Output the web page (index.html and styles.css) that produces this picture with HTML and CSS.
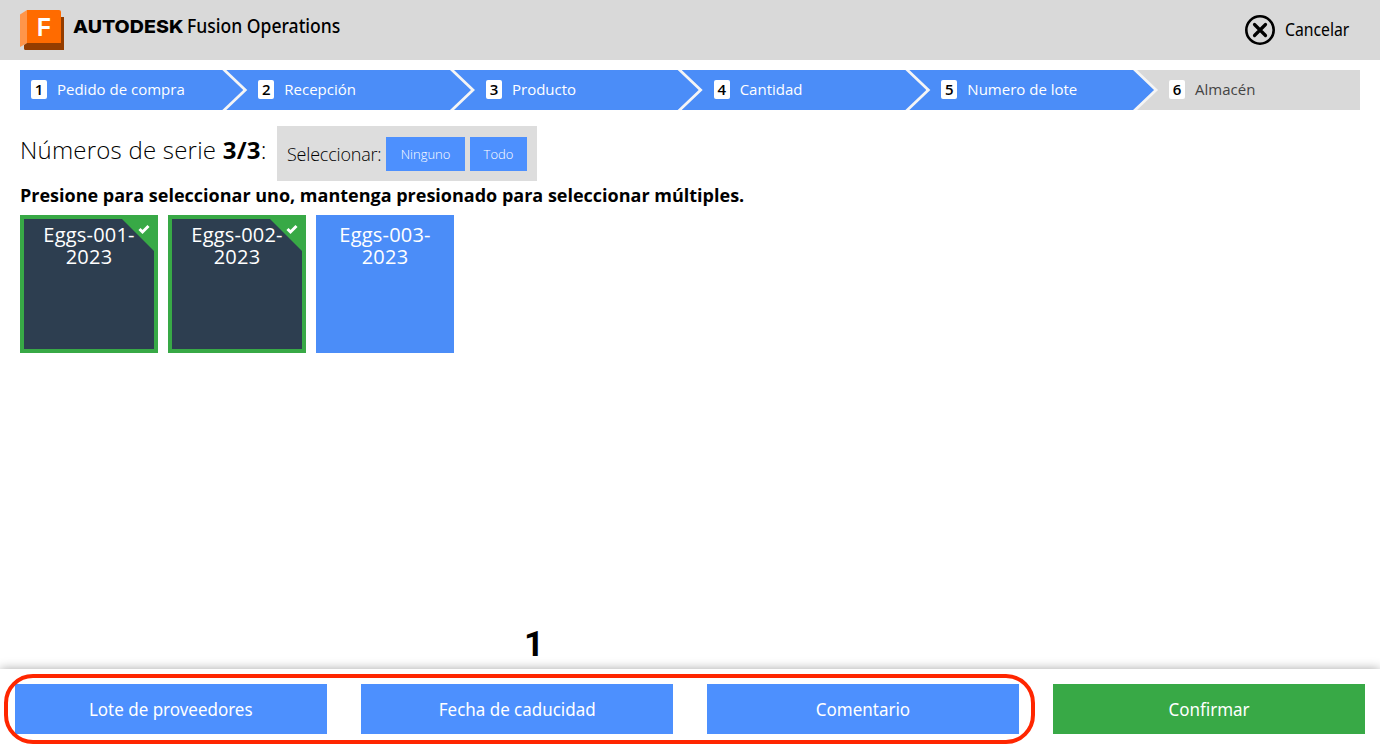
FILE: index.html
```html
<!DOCTYPE html>
<html lang="es">
<head>
<meta charset="utf-8">
<title>Fusion Operations</title>
<link rel="stylesheet" href="styles.css">
</head>
<body>
<header class="topbar">
  <div class="brand">
    <svg class="logo" width="44" height="40" viewBox="0 0 44 40">
      <path fill="#ff954a" d="M0 4.500 7 0v33L0 37z"/>
      <path fill="#943d00" d="M40 7h4v33H5.500Q4 40 4 38.500V35l3-2h33z"/>
      <path fill="#ff6b00" d="M7 0h32q2 0 2 2v31H7z"/>
    </svg>
    <span class="logo-letter">F</span>
    <span class="brand-name">AUTODESK</span>
    <span class="brand-product">Fusion Operations</span>
  </div>
  <button class="cancel">
    <svg width="30" height="30" viewBox="0 0 30 30" fill="none" stroke="#000">
      <circle cx="15" cy="15" r="13.700" stroke-width="2.600"/>
      <path d="m9.500 9.500 11 11m0-11-11 11" stroke-width="3.200" stroke-linecap="round"/>
    </svg>
    <span class="cancel-label">Cancelar</span>
  </button>
</header>
<nav class="steps">
  <div class="step first"><b class="num">1</b><span>Pedido de compra</span></div>
  <div class="step"><b class="num">2</b><span>Recepción</span></div>
  <div class="step"><b class="num">3</b><span>Producto</span></div>
  <div class="step"><b class="num">4</b><span>Cantidad</span></div>
  <div class="step"><b class="num">5</b><span>Numero de lote</span></div>
  <div class="step last"><b class="num">6</b><span>Almacén</span></div>
</nav>
<main class="content">
  <div class="heading">
    <h1 class="title">Números de serie <b>3/3</b>:</h1>
    <div class="select-box">
      <span class="select-label">Seleccionar:</span>
      <button class="small-btn none">Ninguno</button>
      <button class="small-btn all">Todo</button>
    </div>
  </div>
  <p class="hint">Presione para seleccionar uno, mantenga presionado para seleccionar múltiples.</p>
  <div class="tiles">
    <div class="tile selected">Eggs-001-<br>2023
      <svg class="corner" width="40" height="40" viewBox="0 0 40 40"><path fill="#38a946" d="M0 0h40v40z"/><path d="m21.500 14 3 3 6-6" fill="none" stroke="#fff" stroke-width="3"/></svg>
    </div>
    <div class="tile selected">Eggs-002-<br>2023
      <svg class="corner" width="40" height="40" viewBox="0 0 40 40"><path fill="#38a946" d="M0 0h40v40z"/><path d="m21.500 14 3 3 6-6" fill="none" stroke="#fff" stroke-width="3"/></svg>
    </div>
    <div class="tile">Eggs-003-<br>2023</div>
  </div>
</main>
<footer class="actions">
  <button class="action supplier"><span>Lote de proveedores</span></button>
  <button class="action"><span>Fecha de caducidad</span></button>
  <button class="action"><span>Comentario</span></button>
  <button class="action confirm"><span>Confirmar</span></button>
  <div class="callout"></div>
  <span class="callout-number">1</span>
</footer>
</body>
</html>
```
FILE: styles.css
```css
* { box-sizing: border-box; }
body {
  margin: 0;
  height: 749px;
  display: flex;
  flex-direction: column;
  overflow: hidden;
  background: #fff;
  color: #000;
  font-family: "Open Sans", sans-serif;
  white-space: nowrap;
}
button { border: 0; padding: 0; background: none; font-family: inherit; color: inherit; }
.topbar {
  height: 60px;
  flex: none;
  display: flex;
  justify-content: space-between;
  align-items: center;
  padding: 0 30px 0 20px;
  background: #d9d9d9;
}
.brand { position: relative; display: flex; align-items: center; height: 40px; }
.logo { flex: none; }
.logo-letter {
  position: absolute;
  left: 17px;
  top: 2px;
  font: bold 25px/30px "Liberation Sans", sans-serif;
  color: #fff;
  transform: scaleX(0.9);
  transform-origin: left;
}
.brand-name {
  width: 109px;
  margin: -7px 5px 0 9px;
  font: 800 18px/24px Inter, sans-serif;
  transform: scaleX(1.09);
  transform-origin: left;
}
.brand-product {
  margin-top: -8px;
  font: 500 19.500px/24px "Noto Sans", sans-serif;
  transform: scaleX(0.9);
  transform-origin: left;
}
.cancel { display: flex; align-items: center; gap: 10px; }
.cancel-label {
  width: 65px;
  margin-top: -2px;
  text-align: left;
  font: 400 17.500px/24px "Noto Sans", sans-serif;
  transform: scaleX(0.9);
  transform-origin: left;
}
.steps { display: flex; flex: none; height: 40px; margin: 10px 20px 0; background: #f5f5f5; }
.step {
  flex: none;
  display: flex;
  align-items: center;
  gap: 10px;
  width: 244.700px;
  margin-left: -17px;
  padding: 0 0 2px 32px;
  background: #4b8df8;
  color: #fff;
  font-size: 15px;
  clip-path: polygon(0 0, 223.700px 0, 100% 50%, 223.700px 100%, 0 100%, 21px 50%);
}
.step.first { width: 223.300px; margin-left: 0; padding-left: 11px; clip-path: polygon(0 0, 202.300px 0, 100% 50%, 202.300px 100%, 0 100%); }
.step.last { width: 223px; background: #d9d9d9; color: #444; clip-path: polygon(0 0, 100% 0, 100% 100%, 0 100%, 21px 50%); }
.num {
  width: 16px;
  height: 19px;
  border-radius: 2px;
  background: #fff;
  color: #000;
  text-align: center;
  font: 600 15px/19px "Open Sans", sans-serif;
}
.content { flex: 1; padding: 16px 20px 0; }
.heading { display: flex; gap: 10px; height: 55px; }
.title { width: 247px; margin: 0; font-size: 24px; line-height: 48px; font-weight: 300; letter-spacing: 0.220px; }
.title b { font-weight: 700; }
.select-box { display: flex; align-items: center; width: 260px; height: 55px; padding: 0 10px; background: #ddd; }
.select-label { width: 99px; font-size: 18px; font-weight: 300; letter-spacing: -0.200px; }
.small-btn { height: 34px; margin-top: 1px; background: #4d90fe; color: #fff; font-size: 13px; font-weight: 350; }
.none { width: 79px; margin-right: 5px; }
.all { width: 57px; }
.hint { margin: 2px 0 0; font-size: 18px; line-height: 24px; font-weight: 700; }
.tiles { display: flex; gap: 10px; margin-top: 8px; }
.tile {
  position: relative;
  width: 138px;
  height: 138px;
  padding-top: 9px;
  background: #4b8df8;
  color: #fff;
  text-align: center;
  font-size: 20px;
  line-height: 22px;
  letter-spacing: 0.200px;
}
.tile.selected { padding-top: 5px; border: 4px solid #38a946; background: #2d3e50; }
.corner { position: absolute; right: -4px; top: -4px; }
.actions {
  position: relative;
  flex: none;
  display: flex;
  gap: 34px;
  height: 80px;
  padding: 15px 15px 0;
  background: #fff;
  box-shadow: 0 0 10px rgba(0, 0, 0, 0.35);
}
.action { width: 312px; height: 50px; background: #4d90fe; color: #fff; font: 400 18px/26px "Noto Sans", sans-serif; }
.action span { display: inline-block; transform: scaleX(0.943); }
.confirm { background: #38a946; }
.callout {
  position: absolute;
  left: 4px;
  top: 5px;
  width: 1031px;
  height: 70px;
  border: 4px solid #ff2600;
  border-radius: 29px;
}
.callout-number { position: absolute; left: 524px; top: -44px; font: bold 35px/40px Roboto, sans-serif; }
```
